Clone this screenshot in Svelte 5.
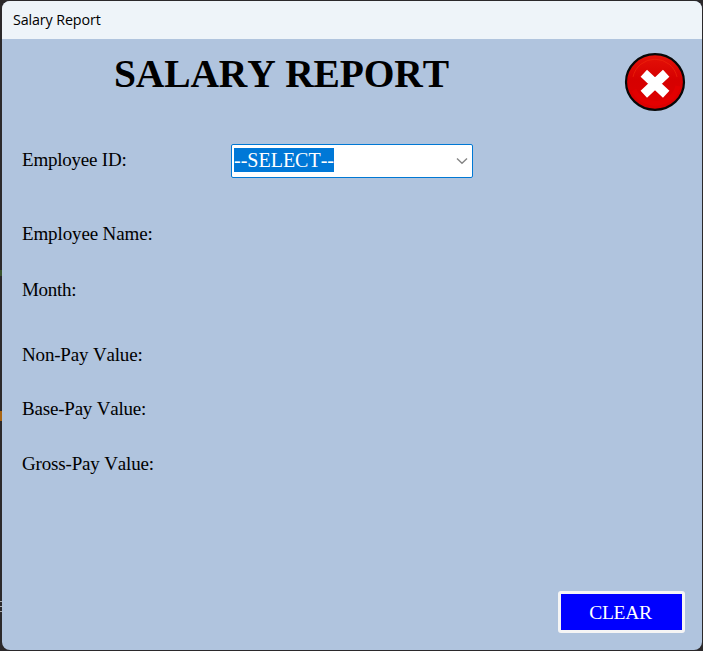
<script>
  const fields = [
    { label: 'Employee ID:', height: 74, spacing: -0.22, select: true },
    { label: 'Employee Name:', height: 56, spacing: -0.13 },
    { label: 'Month:', height: 65, spacing: -0.3 },
    { label: 'Non-Pay Value:', height: 54, spacing: -0.17 },
    { label: 'Base-Pay Value:', height: 55, spacing: -0.2 },
    { label: 'Gross-Pay Value:', height: 54, spacing: -0.17 }
  ];
</script>

<div class="desktop">
  <main class="window">
    <div class="titlebar">Salary Report</div>
    <header>
      <h1>SALARY REPORT</h1>
      <button class="close" aria-label="Close">
        <svg width="62" height="60" viewBox="0 0 62 60">
          <defs>
            <linearGradient id="red" x1="0" y1="0" x2="0" y2="1">
              <stop offset="0" stop-color="#e41208" />
              <stop offset="0.45" stop-color="#d60000" />
              <stop offset="1" stop-color="#dd0000" />
            </linearGradient>
          </defs>
          <ellipse cx="31" cy="30" rx="29" ry="27.8" fill="url(#red)" stroke="#080808" stroke-width="2.2" />
          <path d="M9 25A22.5 22.5 0 0 1 53 25" fill="none" stroke="#f02a0c" stroke-width="1" opacity=".6" />
          <path d="M10 38A23 21 0 0 0 54 34" fill="none" stroke="#f00000" stroke-width="5" opacity=".4" />
          <path d="M19.8 21.3L42.2 42.3M42.2 21.3L19.8 42.3" stroke="#fff" stroke-width="9.4" />
        </svg>
      </button>
    </header>
    <section class="form">
      {#each fields as field}
        <div class="row" style="height: {field.height}px">
          <span class="label" style="letter-spacing: {field.spacing}px">{field.label}</span>
          {#if field.select}
            <div class="combo" role="combobox" aria-label="Employee ID" aria-expanded="false" aria-controls="employees" tabindex="0">
              <span class="selected">--SELECT--</span>
              <svg width="12" height="8" viewBox="0 0 12 8"><path d="M1 1.5L6 6.2L11 1.5" fill="none" stroke="#858585" stroke-width="1.4" /></svg>
            </div>
          {/if}
        </div>
      {/each}
    </section>
    <footer><button class="clear">CLEAR</button></footer>
  </main>
  <i class="speck" style="top: 270px; height: 6px; background: #39522d"></i>
  <i class="speck" style="top: 411px; height: 10px; background: #a96512"></i>
  <i class="speck" style="top: 601px; height: 1px; background: #aaa"></i>
  <i class="speck" style="top: 606px; height: 1px; background: #aaa"></i>
  <i class="speck" style="top: 611px; height: 1px; background: #aaa"></i>
</div>

<style>
  .desktop {
    position: relative;
    box-sizing: border-box;
    width: 703px;
    height: 651px;
    padding: 1px 1px 1px 2px;
    background: #2b292b;
    overflow: hidden;
    font-family: "Liberation Serif", "Times New Roman", serif;
    font-kerning: none;
    color: #000;
  }
  .window {
    display: flex;
    flex-direction: column;
    height: 649px;
    border-radius: 8px;
    background: #b0c4de;
    overflow: hidden;
  }
  .titlebar {
    flex: none;
    height: 38px;
    padding-left: 11px;
    background: #eef4f9;
    font: 14.3px/37px "Open Sans", "Noto Sans", sans-serif;
    letter-spacing: -0.12px;
  }
  header {
    display: flex;
    flex: none;
    justify-content: space-between;
    height: 105px;
    padding: 13px 16px 0 112px;
    box-sizing: border-box;
  }
  h1 {
    margin: 0;
    font-size: 39.5px;
    line-height: 44px;
    letter-spacing: -0.15px;
  }
  button {
    border: 0;
    padding: 0;
    font-family: inherit;
    font-kerning: none;
  }
  .close {
    width: 62px;
    height: 60px;
    background: transparent;
  }
  .close svg { display: block; }
  .form { flex: 1; }
  .row {
    display: flex;
    align-items: flex-start;
    box-sizing: border-box;
    padding-left: 20px;
  }
  .label {
    width: 209px;
    padding-top: 4px;
    font-size: 19px;
    line-height: 24px;
    white-space: nowrap;
  }
  .combo {
    display: flex;
    justify-content: space-between;
    align-items: center;
    width: 242px;
    height: 34px;
    box-sizing: border-box;
    padding: 0 4px 2px 2px;
    border: 1px solid #0078d4;
    border-radius: 2px;
    background: #fff;
    outline: none;
  }
  .combo svg { position: relative; top: 1px; }
  .selected {
    height: 24px;
    background: #0078d7;
    color: #fff;
    font-size: 20px;
    line-height: 24px;
  }
  footer {
    display: flex;
    justify-content: flex-end;
    padding: 0 17px 17px 0;
  }
  .clear {
    width: 127px;
    height: 42px;
    padding: 1px 2px 0 0;
    border: 3px solid #f5f5f5;
    border-radius: 3px;
    background: #00f;
    color: #fff;
    font-size: 19.5px;
    letter-spacing: -0.3px;
  }
  .speck {
    position: absolute;
    left: 0;
    width: 2px;
  }
</style>
